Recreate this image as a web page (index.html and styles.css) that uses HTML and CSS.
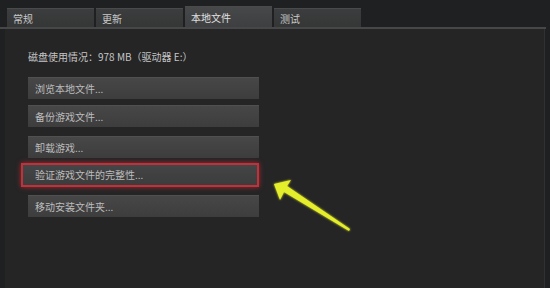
FILE: index.html
```html
<!DOCTYPE html>
<html lang="zh">
<head>
<meta charset="utf-8">
<link rel="stylesheet" href="styles.css">
</head>
<body>
<div class="window">
  <div class="tabs">
    <div class="tab">常规</div>
    <div class="tab">更新</div>
    <div class="tab active">本地文件</div>
    <div class="tab">测试</div>
  </div>
  <div class="rule"></div>
  <div class="content">
    <div class="disk">磁盘使用情况：978 MB（驱动器 E:）</div>
    <div class="btn b1">浏览本地文件...</div>
    <div class="btn b2">备份游戏文件...</div>
    <div class="btn b3">卸载游戏...</div>
    <div class="highlight"><div class="btn b4">验证游戏文件的完整性...</div></div>
    <div class="btn b5">移动安装文件夹...</div>
  </div>
  <svg class="arrow" width="100" height="70" viewBox="0 0 100 70">
    <defs>
      <filter id="glow" x="-20%" y="-20%" width="140%" height="140%">
        <feGaussianBlur stdDeviation="1.2" result="b"/>
        <feMerge><feMergeNode in="b"/><feMergeNode in="SourceGraphic"/></feMerge>
      </filter>
    </defs>
    <g filter="url(#glow)">
      <polygon points="4,9 21,5 17,11 80,54 79,56 14,17 10,25" fill="#e4ee2a"/>
    </g>
  </svg>
</div>
</body>
</html>
```
FILE: styles.css
```css
* { box-sizing: border-box; }
html, body { margin: 0; padding: 0; }
body {
  width: 550px;
  height: 288px;
  overflow: hidden;
  background: #1c1e20;
  font-family: "Noto Sans CJK SC", "Liberation Sans", sans-serif;
}
.window {
  position: relative;
  width: 550px;
  height: 288px;
  display: flex;
  flex-direction: column;
  background: #1f2022;
}
.tabs {
  display: flex;
  gap: 2px;
  padding: 7px 0 0 7px;
  height: 27px;
  align-items: flex-end;
}
.tab {
  width: 87px;
  height: 19px;
  background: linear-gradient(#3c3d3e, #353636);
  color: #c9c9c9;
  font-size: 10px;
  line-height: 19px;
  padding-left: 6px;
  border-top: 1px solid #4a4a4a;
}
.tab.active {
  height: 21px;
  background: linear-gradient(#474849, #3e3f40);
  color: #e0e0e0;
  line-height: 21px;
}
.rule {
  height: 2px;
  width: 546px;
  background: #464748;
}
.content {
  flex: 1;
  margin-left: 5px;
  width: 540px;
  background: #252526;
  border-right: 1px solid #303133;
  display: flex;
  flex-direction: column;
  align-items: flex-start;
  padding-left: 23px;
  padding-top: 21px;
}
.disk {
  color: #c4c4c4;
  font-size: 10px;
  line-height: 14px;
  height: 14px;
}
.btn {
  width: 231px;
  height: 22px;
  background: linear-gradient(#474748, #3d3d3e);
  color: #bdbdbd;
  font-size: 10px;
  line-height: 22px;
  padding-left: 7px;
  border-top: 1px solid #505051;
}
.b1 { margin-top: 13px; }
.b2 { margin-top: 6px; }
.b3 { margin-top: 9px; }
.highlight {
  margin-top: 5px;
  margin-left: -7px;
  width: 238px;
  height: 24px;
  border: 2px solid #c0323b;
  box-shadow: 0 0 5px rgba(210, 40, 50, 0.75), inset 0 0 3px rgba(210, 40, 50, 0.6);
}
.highlight .btn {
  width: 234px;
  height: 20px;
  line-height: 20px;
  padding-left: 12px;
  border-top: none;
  background: linear-gradient(#444546, #3c3c3d);
}
.b5 { margin-top: 8px; }
.arrow {
  position: absolute;
  left: 270px;
  top: 175px;
}
```
